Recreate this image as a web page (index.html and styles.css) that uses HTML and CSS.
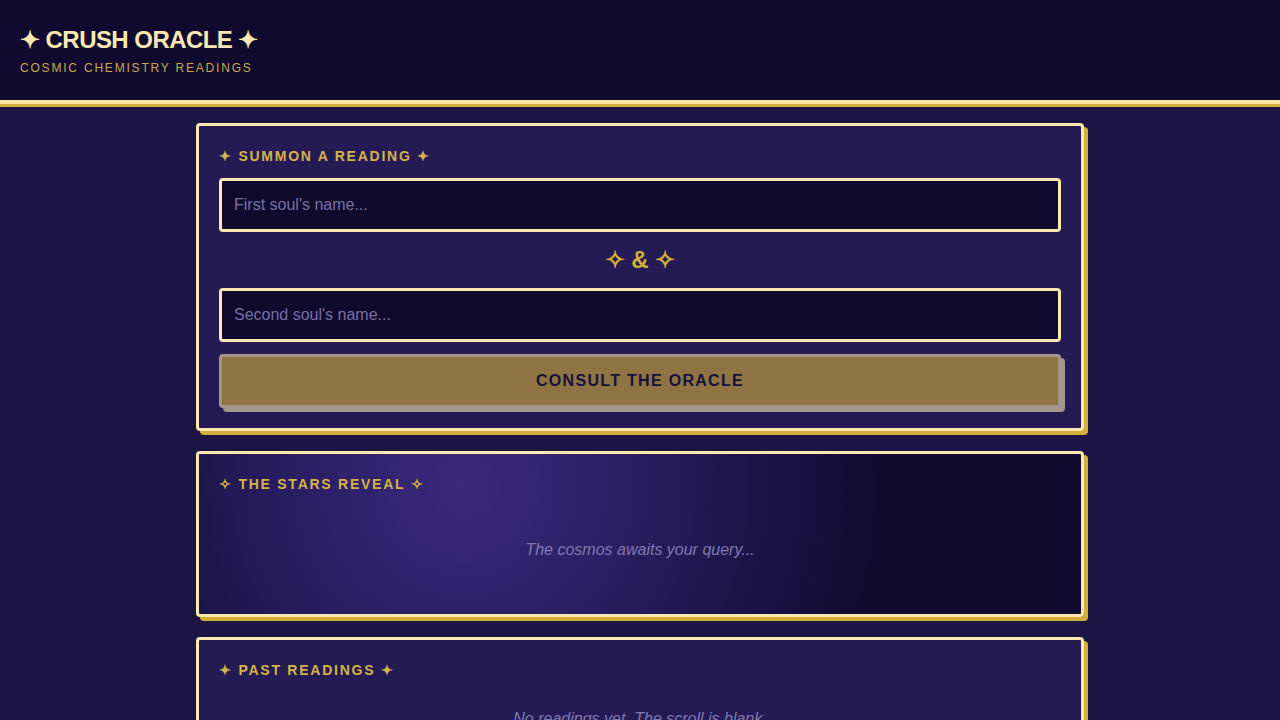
FILE: index.html
```html
<!DOCTYPE html>
<html lang="en">
<head>
<meta charset="utf-8">
<title>Crush Oracle</title>
<link rel="stylesheet" href="styles.css">
</head>
<body>
<header class="site-header">
  <h1 class="logo">✦ CRUSH ORACLE ✦</h1>
  <p class="tagline">COSMIC CHEMISTRY READINGS</p>
</header>
<main class="main">
  <section class="card">
    <h2 class="card-title">✦ SUMMON A READING ✦</h2>
    <input class="soul-input" type="text" placeholder="First soul's name...">
    <div class="amp">✧ &amp; ✧</div>
    <input class="soul-input" type="text" placeholder="Second soul's name...">
    <button class="consult" disabled>CONSULT THE ORACLE</button>
  </section>
  <section class="card card-reveal">
    <h2 class="card-title">✧ THE STARS REVEAL ✧</h2>
    <p class="empty">The cosmos awaits your query...</p>
  </section>
  <section class="card">
    <h2 class="card-title">✦ PAST READINGS ✦</h2>
    <p class="empty empty-past">No readings yet. The scroll is blank.</p>
  </section>
</main>
</body>
</html>
```
FILE: styles.css
```css
* { box-sizing: border-box; }
html, body { margin: 0; padding: 0; }
body {
  background: #1c1442;
  font-family: "Liberation Sans", Arial, sans-serif;
  color: #fce8b0;
  min-height: 100vh;
}
.site-header {
  background: #100a2e;
  height: 104px;
  padding: 26px 20px 0;
  border-bottom: 4px solid #fbe6a6;
  box-shadow: 0 3px 0 #d4af37;
}
.logo {
  margin: 0;
  font-size: 24px;
  line-height: 28px;
  font-weight: 700;
  letter-spacing: -0.55px;
  color: #fce8b0;
}
.tagline {
  margin: 6px 0 0;
  font-size: 12px;
  line-height: 16px;
  letter-spacing: 1.8px;
  color: #c9a94a;
}
.main {
  width: 888px;
  margin: 0 auto;
  padding-top: 19px;
  display: flex;
  flex-direction: column;
  gap: 20px;
}
.card {
  background: #241b54;
  border: 3px solid #fce8b0;
  border-radius: 4px;
  box-shadow: 4px 4px 0 #d4af37;
  padding: 20px;
  display: flex;
  flex-direction: column;
}
.card-reveal {
  background: radial-gradient(circle at 30% 20%, #3a2a7c 0%, #2c2168 22%, #1a1244 50%, #100a2e 68%);
}
.card-title {
  margin: 0 0 12px;
  font-size: 14px;
  line-height: 20px;
  font-weight: 700;
  letter-spacing: 1.75px;
  color: #d6b24a;
}
.soul-input {
  display: block;
  width: 100%;
  height: 54px;
  padding: 0 12px;
  background: #100a2e;
  border: 3px solid #fce8b0;
  border-radius: 4px;
  font-family: "Liberation Sans", Arial, sans-serif;
  font-size: 16px;
  color: #fce8b0;
  outline: none;
}
.soul-input::placeholder { color: #7a70a8; }
.amp {
  height: 56px;
  display: flex;
  align-items: center;
  justify-content: center;
  font-size: 24px;
  font-weight: 700;
  color: #d4af37;
}
.consult {
  margin-top: 12px;
  height: 54px;
  width: 100%;
  background: #d4af37;
  border: 3px solid #fce8b0;
  border-radius: 4px;
  box-shadow: 4px 4px 0 #fce8b0;
  font-family: "Liberation Sans", Arial, sans-serif;
  font-size: 16px;
  font-weight: 700;
  letter-spacing: 1.3px;
  color: #100a2e;
  opacity: 0.6;
}
.empty {
  margin: 0;
  padding: 35px 0;
  line-height: 18px;
  font-size: 16px;
  font-style: italic;
  text-align: center;
  color: #8078b0;
}
.empty-past { padding-top: 18px; }
```
